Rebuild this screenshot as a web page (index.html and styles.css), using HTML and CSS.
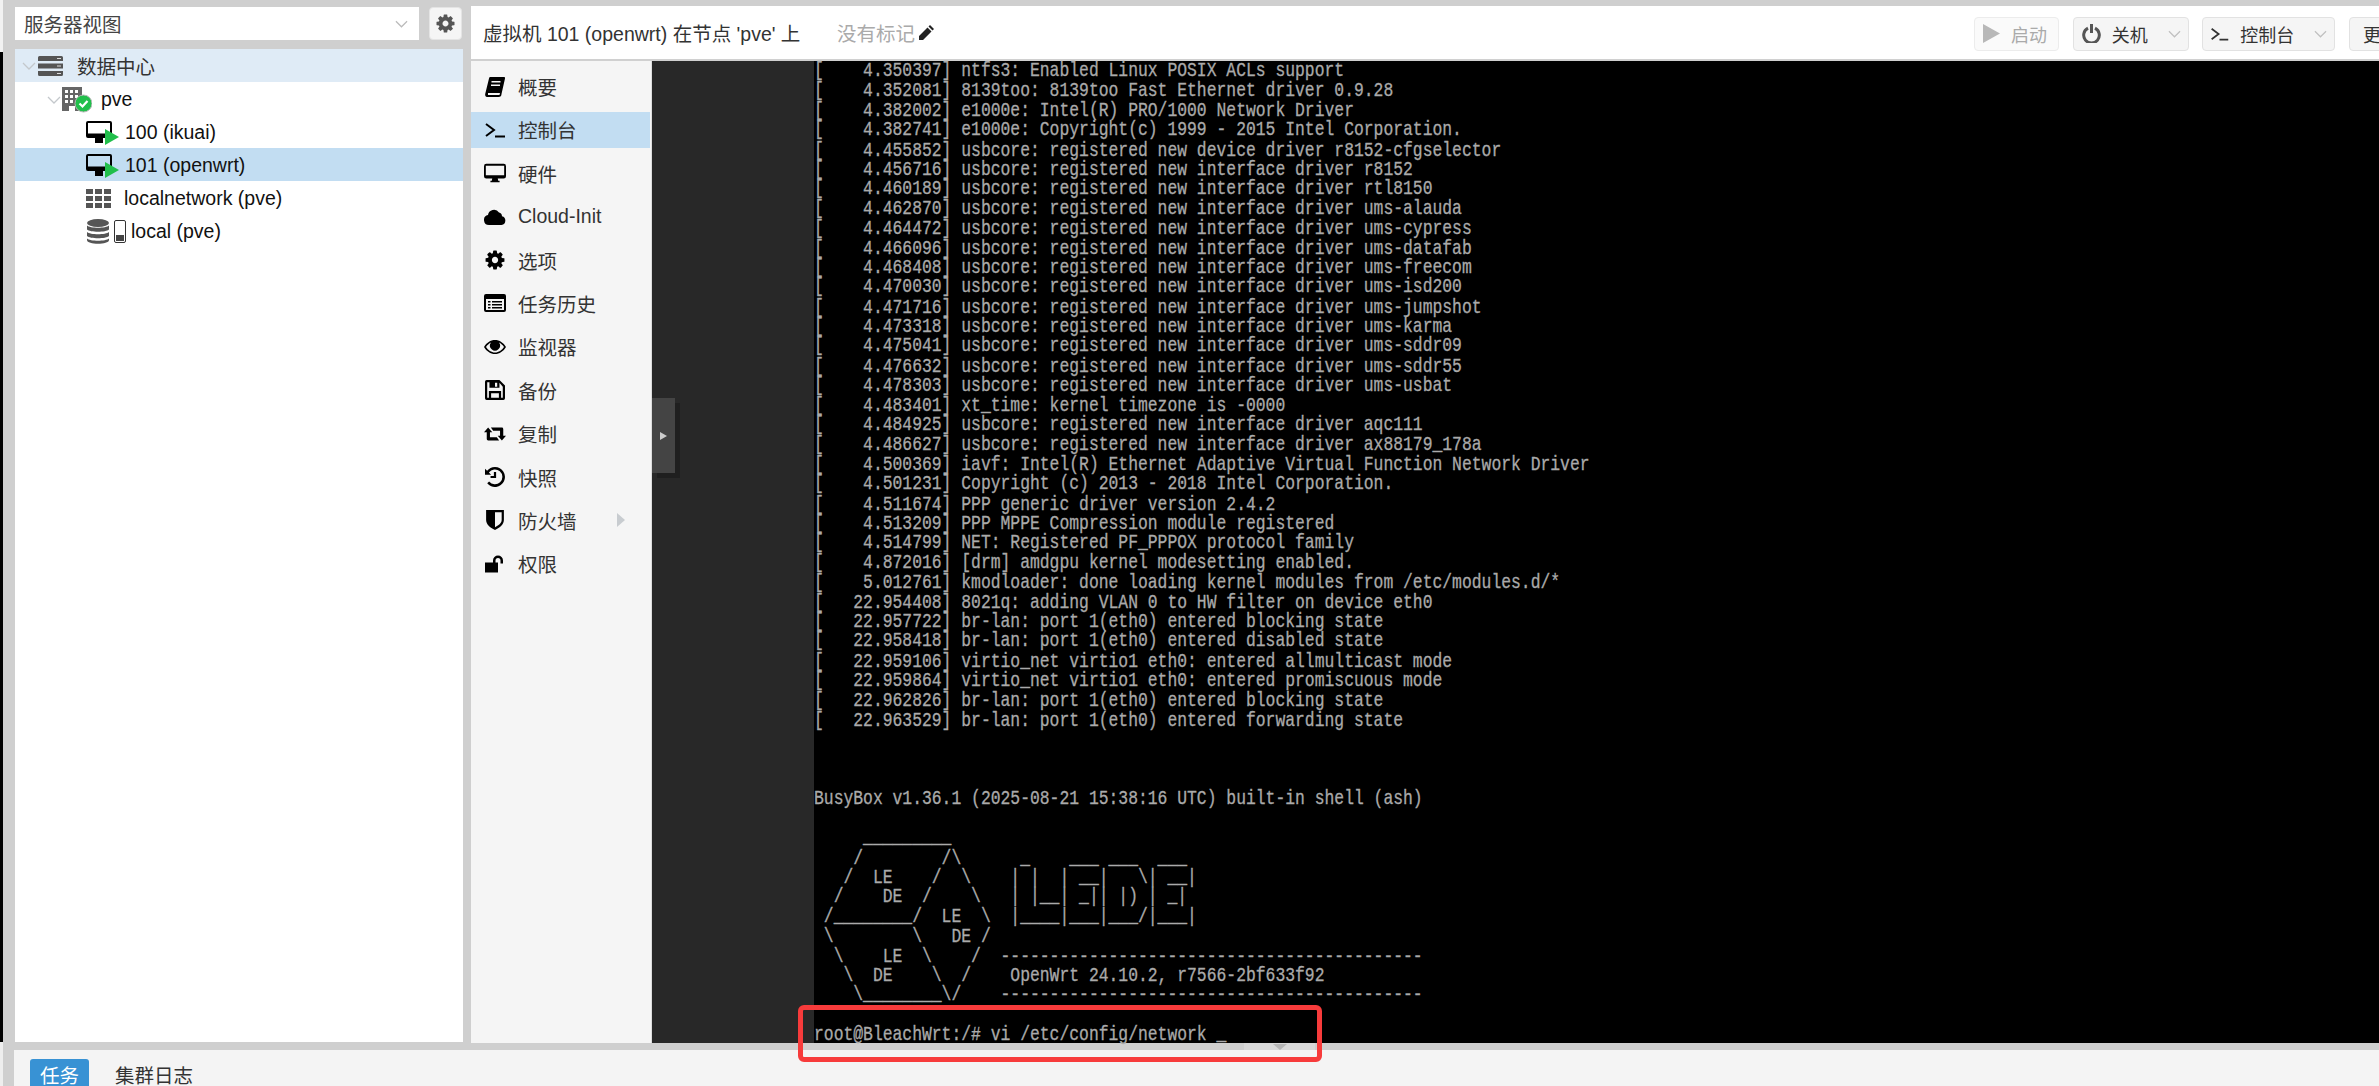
FILE: index.html
```html
<!DOCTYPE html>
<html lang="zh-CN">
<head>
<meta charset="utf-8">
<title>pve - Proxmox</title>
<link rel="stylesheet" href="styles.css">
</head>
<body>
<svg class="defs" width="0" height="0" aria-hidden="true">
  <symbol id="gear" viewBox="0 0 1792 1792"><path d="M1152 896q0-106-75-181t-181-75-181 75-75 181 75 181 181 75 181-75 75-181zm512-109v222q0 12-8 23t-20 13l-185 28q-19 54-39 91 35 50 107 138 10 12 10 25t-9 23q-27 37-99 108t-94 71q-12 0-26-9l-138-108q-44 23-91 38-16 136-29 186-7 28-36 28h-222q-14 0-24.5-8.5t-11.5-21.5l-28-184q-49-16-90-37l-141 107q-10 9-25 9-14 0-25-11-126-114-165-168-7-10-7-23 0-12 8-23 15-21 51-66.5t54-70.5q-27-50-41-99l-183-27q-13-2-21-12.5t-8-23.5v-222q0-12 8-23t19-13l186-28q14-46 39-92-40-57-107-138-10-12-10-24 0-10 9-23 26-36 98.5-107.5t94.5-71.5q13 0 26 10l138 107q44-23 91-38 16-136 29-186 7-28 36-28h222q14 0 24.5 8.5t11.5 21.5l28 184q49 16 90 37l142-107q9-9 24-9 13 0 25 10 129 119 165 170 7 8 7 22 0 12-8 23-15 21-51 66.5t-54 70.5q26 50 41 98l183 28q13 2 21 12.5t8 23.5z"/></symbol>
  <symbol id="prompt" viewBox="0 0 20 16"><path d="M1 2l8 6-8 6" fill="none" stroke="currentColor" stroke-width="2"/><path d="M10 13.500h10v2H10z"/></symbol>
  <symbol id="monitor" viewBox="0 0 24 20"><path fill-rule="evenodd" d="M2.500 0h19A2.500 2.500 0 0 1 24 2.500v11a2.500 2.500 0 0 1-2.500 2.500H15l.5 2.500h1.500V20H7v-1.500h1.500L9 16H2.500A2.500 2.500 0 0 1 0 13.500v-11A2.500 2.500 0 0 1 2.500 0zM2 2v10.500h20V2z"/></symbol>
  <symbol id="chev" viewBox="0 0 14 8"><path d="M1 1l6 6 6-6" fill="none" stroke="currentColor" stroke-width="1.300"/></symbol>
  <symbol id="vm" viewBox="0 0 34 24"><path fill-rule="evenodd" d="M2 0h22a2 2 0 0 1 2 2v13a2 2 0 0 1-2 2h-7v5H9v-5H2a2 2 0 0 1-2-2V2a2 2 0 0 1 2-2zm0 2v10.500h22V2z" fill="#000"/><path d="M19 8l14 8-14 8z" fill="#21bf4b"/></symbol>
</svg>

<div class="page">
  <div class="edge"><div class="edge-top"></div><div class="edge-dark"></div><div class="edge-bottom"></div></div>
  <div class="main">
    <div class="workspace">
      <aside class="side">
        <div class="side-top">
          <div class="view-select"><span>服务器视图</span><svg class="chev-select"><use href="#chev"/></svg></div>
          <button class="gear-btn"><svg class="ico-gear"><use href="#gear"/></svg></button>
        </div>
        <div class="tree">
          <div class="row row-dc">
            <svg class="tw"><use href="#chev"/></svg>
            <svg class="i-dc" viewBox="0 0 25 20"><path d="M0 1.500A1.500 1.500 0 0 1 1.500 0h22A1.500 1.500 0 0 1 25 1.500V5H0zM0 7.500h25v5H0zM0 15h25v3.500a1.500 1.500 0 0 1-1.500 1.500h-22A1.500 1.500 0 0 1 0 18.500z" fill="#555"/><path d="M19 2h4v1h-4zM19 9.500h4v1h-4zM19 17h4v1h-4z" fill="#ddd"/></svg>
            <span>数据中心</span>
          </div>
          <div class="row row-node">
            <svg class="tw"><use href="#chev"/></svg>
            <svg class="i-node" viewBox="0 0 30 26"><path d="M0 0h20v24H0z" fill="#666"/><path d="M3 3h3v3H3zM8 3h3v3H8zM13 3h3v3h-3zM3 8h3v3H3zM8 8h3v3H8zM13 8h3v3h-3zM3 13h3v3H3zM8 13h3v3H8zM7 19h6v5H7z" fill="#fff"/><circle cx="21.500" cy="16.500" r="8.500" fill="#21bf4b" stroke="#b8b8b8" stroke-width="1"/><path d="M17.500 16.500l3 3 5-5.500" fill="none" stroke="#fff" stroke-width="2.200"/></svg>
            <span>pve</span>
          </div>
          <div class="row row-leaf"><svg class="i-vm"><use href="#vm"/></svg><span>100 (ikuai)</span></div>
          <div class="row row-leaf row-sel"><svg class="i-vm"><use href="#vm"/></svg><span>101 (openwrt)</span></div>
          <div class="row row-leaf">
            <svg class="i-net" viewBox="0 0 25 19"><path d="M0 0h7v5H0zM9 0h7v5H9zM18 0h7v5h-7zM0 7h7v5H0zM9 7h7v5H9zM18 7h7v5h-7zM0 14h7v5H0zM9 14h7v5H9zM18 14h7v5h-7z" fill="#555"/></svg>
            <span>localnetwork (pve)</span>
          </div>
          <div class="row row-leaf">
            <svg class="i-db" viewBox="0 0 22 25"><ellipse cx="11" cy="4" rx="11" ry="4" fill="#555"/><path d="M0 6.500c3 3 19 3 22 0v4c-3 3-19 3-22 0zM0 13c3 3 19 3 22 0v4c-3 3-19 3-22 0zM0 19.500c3 3 19 3 22 0V21c0 5-22 5-22 0z" fill="#555"/></svg>
            <svg class="i-dev" viewBox="0 0 12 23"><rect x=".5" y=".5" width="11" height="22" rx="1.500" fill="#fff" stroke="#333"/><path d="M2 15h8v6H2z" fill="#444"/></svg>
            <span>local (pve)</span>
          </div>
        </div>
      </aside>

      <section class="panel">
        <header class="panel-head">
          <span class="title">虚拟机 101 (openwrt) 在节点 'pve' 上</span>
          <span class="tags">没有标记</span>
          <svg class="i-pencil" viewBox="0 0 17 17"><path d="M12 1l4 4-1.500 1.500-4-4zM9.500 3.500l4 4L5 16H1v-4z" fill="#222"/></svg>
          <div class="toolbar">
            <div class="btn btn-off"><svg class="i-play" viewBox="0 0 17 19"><path d="M0 0l17 9.500L0 19z"/></svg><span>启动</span></div>
            <div class="btn btn-power">
              <svg class="i-power" viewBox="0 0 19 19"><path d="M6 4.200a7.800 7.800 0 1 0 7 0" fill="none" stroke="currentColor" stroke-width="3"/><path d="M8 0h3v9H8z"/></svg>
              <span>关机</span><i class="sep"></i><svg class="chev-btn"><use href="#chev"/></svg>
            </div>
            <div class="btn btn-console">
              <svg class="i-prompt-sm"><use href="#prompt"/></svg>
              <span>控制台</span><i class="sep"></i><svg class="chev-btn"><use href="#chev"/></svg>
            </div>
            <div class="btn btn-more"><span>更</span></div>
          </div>
        </header>
        <div class="panel-body">
          <nav class="menu">
            <div class="item"><svg class="mi" viewBox="0 0 20 20"><path d="M5 0h14a1 1 0 0 1 1 1.500L16.500 17a3 3 0 0 1-3 3H2c-1.500 0-2-1.500-1.800-3L4 1.500A2 2 0 0 1 5 0z"/><path d="M6.500 4h9v1.500h-9zM6 7.500h9V9H6zM3 16h12l-.5 2H3z" fill="#f5f5f5"/></svg><span>概要</span></div>
            <div class="item item-sel"><svg class="mi"><use href="#prompt"/></svg><span>控制台</span></div>
            <div class="item"><svg class="mi mi-wide"><use href="#monitor"/></svg><span>硬件</span></div>
            <div class="item"><svg class="mi mi-wide" viewBox="0 0 22 16"><path d="M5 16a5 5 0 0 1-1-9.900A6 6 0 0 1 15 3.500 4 4 0 0 1 18 7.200 4.500 4.500 0 0 1 17.500 16z"/></svg><span>Cloud-Init</span></div>
            <div class="item"><svg class="mi mi-gear"><use href="#gear"/></svg><span>选项</span></div>
            <div class="item"><svg class="mi mi-wide" viewBox="0 0 22 18"><path fill-rule="evenodd" d="M2 0h18a2 2 0 0 1 2 2v14a2 2 0 0 1-2 2H2a2 2 0 0 1-2-2V2a2 2 0 0 1 2-2zm0 5v11h18V5z"/><path d="M4 7h2.500v1.500H4zM8 7h10v1.500H8zM4 10h2.500v1.500H4zM8 10h10v1.500H8zM4 13h2.500v1.500H4zM8 13h10v1.500H8z"/></svg><span>任务历史</span></div>
            <div class="item"><svg class="mi mi-wide" viewBox="0 0 22 14"><path fill-rule="evenodd" d="M11 0c4.500 0 8.500 2.700 11 7-2.500 4.300-6.500 7-11 7S2.500 11.300 0 7c2.500-4.300 6.500-7 11-7zM2 7c2 3 5.300 5.500 9 5.500S18 10 20 7c-1.300-2-3-3.500-5-4.500a5 5 0 1 1-8 0C5 3.500 3.300 5 2 7z"/></svg><span>监视器</span></div>
            <div class="item"><svg class="mi" viewBox="0 0 18 18"><path fill-rule="evenodd" d="M1.500 0H13l5 5v11.500a1.500 1.500 0 0 1-1.500 1.500h-15A1.500 1.500 0 0 1 0 16.500v-15A1.500 1.500 0 0 1 1.500 0zM2 2v14h1.500v-6h11v6H16V6l-3-3.500V7H4V2zm3.500 10v4h7v-4zM9 2.500V6h2V2.500z"/></svg><span>备份</span></div>
            <div class="item"><svg class="mi mi-wide" viewBox="0 0 24 14"><path d="M0 5l4.500-5L9 5H6.500v5.500H14l2.500 3.500H4.500A1.500 1.500 0 0 1 3 12.500V5zM7.500 0h12A1.500 1.500 0 0 1 21 1.500V9h3l-4.500 5-4.500-5h2.500V3.500H10z"/></svg><span>复制</span></div>
            <div class="item"><svg class="mi" viewBox="0 0 18 18"><path d="M9 0a9 9 0 1 1-7 14.700l1.700-1.600A6.700 6.700 0 1 0 3.500 5L5.500 7H0V1.500L1.900 3.400A9 9 0 0 1 9 0z"/><path d="M8 4.500h2V10H5V8h3z"/></svg><span>快照</span></div>
            <div class="item"><svg class="mi" viewBox="0 0 16 18"><path fill-rule="evenodd" d="M0 0h16v9c0 4-3.500 7-8 9-4.500-2-8-5-8-9zm8 2v13.500c3-1.500 6-3.700 6-6.500V2z"/></svg><span>防火墙</span><svg class="mi-arrow" viewBox="0 0 8 14"><path d="M0 0l8 7-8 7z"/></svg></div>
            <div class="item"><svg class="mi" viewBox="0 0 20 17"><path d="M0 7h13v10H0z"/><path d="M8 8V5a5 5 0 0 1 10 0v3h-2.500V5a2.500 2.500 0 0 0-5 0v3z"/></svg><span>权限</span></div>
          </nav>
          <div class="console">
            <div class="console-gutter">
              <div class="collapse"><svg class="i-collapse" viewBox="0 0 7 8"><path d="M0 0l7 4-7 4z"/></svg></div>
            </div>
            <div class="screen">
<pre class="tty">[    4.350397] ntfs3: Enabled Linux POSIX ACLs support
[    4.352081] 8139too: 8139too Fast Ethernet driver 0.9.28
[    4.382002] e1000e: Intel(R) PRO/1000 Network Driver
[    4.382741] e1000e: Copyright(c) 1999 - 2015 Intel Corporation.
[    4.455852] usbcore: registered new device driver r8152-cfgselector
[    4.456716] usbcore: registered new interface driver r8152
[    4.460189] usbcore: registered new interface driver rtl8150
[    4.462870] usbcore: registered new interface driver ums-alauda
[    4.464472] usbcore: registered new interface driver ums-cypress
[    4.466096] usbcore: registered new interface driver ums-datafab
[    4.468408] usbcore: registered new interface driver ums-freecom
[    4.470030] usbcore: registered new interface driver ums-isd200
[    4.471716] usbcore: registered new interface driver ums-jumpshot
[    4.473318] usbcore: registered new interface driver ums-karma
[    4.475041] usbcore: registered new interface driver ums-sddr09
[    4.476632] usbcore: registered new interface driver ums-sddr55
[    4.478303] usbcore: registered new interface driver ums-usbat
[    4.483401] xt_time: kernel timezone is -0000
[    4.484925] usbcore: registered new interface driver aqc111
[    4.486627] usbcore: registered new interface driver ax88179_178a
[    4.500369] iavf: Intel(R) Ethernet Adaptive Virtual Function Network Driver
[    4.501231] Copyright (c) 2013 - 2018 Intel Corporation.
[    4.511674] PPP generic driver version 2.4.2
[    4.513209] PPP MPPE Compression module registered
[    4.514799] NET: Registered PF_PPPOX protocol family
[    4.872016] [drm] amdgpu kernel modesetting enabled.
[    5.012761] kmodloader: done loading kernel modules from /etc/modules.d/*
[   22.954408] 8021q: adding VLAN 0 to HW filter on device eth0
[   22.957722] br-lan: port 1(eth0) entered blocking state
[   22.958418] br-lan: port 1(eth0) entered disabled state
[   22.959106] virtio_net virtio1 eth0: entered allmulticast mode
[   22.959864] virtio_net virtio1 eth0: entered promiscuous mode
[   22.962826] br-lan: port 1(eth0) entered blocking state
[   22.963529] br-lan: port 1(eth0) entered forwarding state



BusyBox v1.36.1 (2025-08-21 15:38:16 UTC) built-in shell (ash)

     _________
    /        /\      _    ___ ___  ___
   /  LE    /  \    | |  | __|   \| __|
  /    DE  /    \   | |__| _|| |) | _|
 /________/  LE  \  |____|___|___/|___|
 \        \   DE /
  \    LE  \    /  -------------------------------------------
   \  DE    \  /    OpenWrt 24.10.2, r7566-2bf633f92
    \________\/    -------------------------------------------

root@BleachWrt:/# vi /etc/config/network _</pre>
            </div>
          </div>
        </div>
      </section>
    </div>
    <footer class="dock">
      <div class="tab tab-on">任务</div>
      <div class="tab">集群日志</div>
    </footer>
  </div>
</div>
<div class="dock-handle"><svg class="i-handle" viewBox="0 0 14 6"><path d="M0 0h14L7 6z"/></svg></div>
<div class="callout"></div>
</body>
</html>
```
FILE: styles.css
```css
* { box-sizing: border-box; }
html, body { margin: 0; height: 100%; overflow: hidden; }
body {
  background: #cfcfcf;
  color: #1a1a1a;
  font-family: "Liberation Sans", "Noto Sans CJK SC", sans-serif;
  font-size: 19.5px;
}
.defs { position: absolute; }
svg { display: block; flex: none; fill: currentColor; }

.page { display: flex; height: 1086px; width: 2379px; }
.edge { width: 3px; display: flex; flex-direction: column; }
.edge-top { height: 52px; background: #f2f2f2; }
.edge-dark { height: 990px; background: #000; }
.edge-bottom { flex: 1; background: #eee; }
.main { flex: 1; display: flex; flex-direction: column; min-width: 0; }

.workspace { height: 1043px; display: flex; padding-left: 12px; padding-top: 6px; gap: 8px; }
.dock {
  flex: 1; margin-top: 7px; margin-left: 11px;
  background: #f4f4f4;
  display: flex; gap: 8px; padding: 9px 0 0 16px;
}
.tab { height: 27px; padding: 4px 10px 0; width: 59px; border-radius: 3px 3px 0 0; line-height: 27px; white-space: nowrap; color: #333; }
.tab + .tab { width: auto; margin-left: 7px; padding-left: 11px; }
.tab-on { background: #3892d4; color: #fff; }

/* left tree */
.side { width: 448px; display: flex; flex-direction: column; }
.side-top { height: 43px; display: flex; gap: 10px; padding-top: 1px; padding-right: 1px; }
.view-select {
  flex: 1; height: 33px; background: #fff; display: flex; align-items: center;
  justify-content: space-between; padding: 0 11px 0 9px; color: #444;
}
.chev-select { width: 13px; height: 8px; color: #bbb; }
.gear-btn {
  width: 33px; height: 33px; padding: 0; border: 1px solid #e4e4e4; border-radius: 4px;
  background: #f5f5f5; display: flex; align-items: center; justify-content: center; color: #555;
}
.ico-gear { width: 21px; height: 21px; }
.tree { flex: 1; background: #fff; margin-bottom: 1px; }
.row { height: 33px; display: flex; align-items: center; color: #111; }
.tw { width: 14px; height: 8px; color: #c4c8cc; }
.row-dc { background: #dfebf6; padding-left: 7px; color: #333; }
.row-dc .tw { margin-right: 2px; }
.row-dc .i-dc { width: 25px; height: 20px; margin-right: 14px; }
.row-node { padding: 2px 0 0 32px; }
.row-node .tw { margin-right: 1px; }
.i-node { width: 30px; height: 26px; margin-right: 9px; }
.row-leaf { padding: 2px 0 0 71px; }
.row-sel { background: #c2ddf2; }
.i-vm { width: 34px; height: 24px; margin-right: 5px; }
.i-net { width: 25px; height: 19px; margin-right: 13px; }
.i-db { width: 22px; height: 25px; margin: 0 5px 0 1px; }
.i-dev { width: 12px; height: 23px; margin-right: 5px; }

/* right panel */
.panel { flex: 1; display: flex; flex-direction: column; min-width: 0; background: #fff; }
.panel-head {
  height: 55px; display: flex; align-items: center; padding-left: 12px;
  border-bottom: 2px solid #d0d0d0; flex: none; white-space: nowrap; position: relative;
}
.title { color: #333; width: 354px; }
.tags { color: #aaa; margin-right: 3px; }
.i-pencil { width: 17px; height: 17px; }
.toolbar { margin-left: auto; display: flex; gap: 13.67px; height: 34px; margin-top: 2px; margin-right: -50px; }
.btn {
  height: 34px; display: flex; align-items: center; background: #f5f5f5;
  border: 1px solid #e2e2e2; border-radius: 4px; font-size: 18px; color: #333; padding: 0 8px; overflow: hidden;
}
.btn-off { background: #fafafa; border-color: #ececec; color: #aaa; width: 85px; }
.btn-power { width: 116px; }
.btn-console { width: 133px; padding-left: 7px; }
.i-play { width: 17px; height: 19px; color: #b8b8b8; margin-right: 11px; }
.i-power { width: 19px; height: 19px; color: #555; margin-right: 11px; }
.i-prompt-sm { width: 19px; height: 14px; margin-right: 11px; color: #333; }
.sep { width: 1px; height: 24px; background: #ddd; margin: 0 10px; }
.chev-btn { width: 13px; height: 8px; color: #c0c0c0; margin-right: 1px; }
.btn-more { width: 80px; padding-left: 13px; }

.panel-body { flex: 1; display: flex; min-height: 0; }
.menu {
  width: 181px; background: #f5f5f5; border-right: 1px solid #ddd; flex: none;
  display: flex; flex-direction: column; gap: 7.4px; padding: 7.5px 1px 0 0;
}
.item { height: 36px; flex: none; display: flex; align-items: center; padding-left: 14px; color: #333; position: relative; }
.item-sel { background: #c2ddf2; }
.mi { width: 20px; height: 20px; margin-right: 13px; color: #000; }
.mi-wide { width: 22px; margin-left: -1px; margin-right: 12px; }
.mi-gear { width: 22px; height: 22px; margin-left: -1px; margin-right: 12px; }
.mi-arrow { width: 8px; height: 14px; color: #c8ccd0; margin-left: auto; margin-right: 25px; }

.console { flex: 1; display: flex; min-width: 0; background: #000; }
.console-gutter { width: 162px; background: #282828; position: relative; }
.collapse {
  position: absolute; left: 0; top: 337px; width: 23px; height: 75px; background: #444;
  box-shadow: 5px 5px 0 #1f1f1f; display: flex; align-items: center; justify-content: center;
}
.i-collapse { width: 7px; height: 8px; color: #ccc; }
.screen { flex: 1; padding-top: 1px; min-width: 0; }
.tty {
  margin: 0; color: #aaa; font-family: "Liberation Mono", monospace; font-size: 16.37px;
  line-height: 16.39px; transform: scaleY(1.2); transform-origin: 0 0;
  -webkit-text-stroke: 0.25px #aaa;
}

.dock-handle {
  position: absolute; left: 1244px; top: 1043px; width: 71px; height: 7px; background: #d8d8d8;
  display: flex; justify-content: center; align-items: flex-start;
}
.i-handle { width: 14px; height: 6px; color: #b4b4b4; margin-top: 1px; }
.callout {
  position: absolute; left: 798px; top: 1005px; width: 524px; height: 57px;
  border: 5px solid #f73b3b; border-radius: 6px; pointer-events: none;
}
```
